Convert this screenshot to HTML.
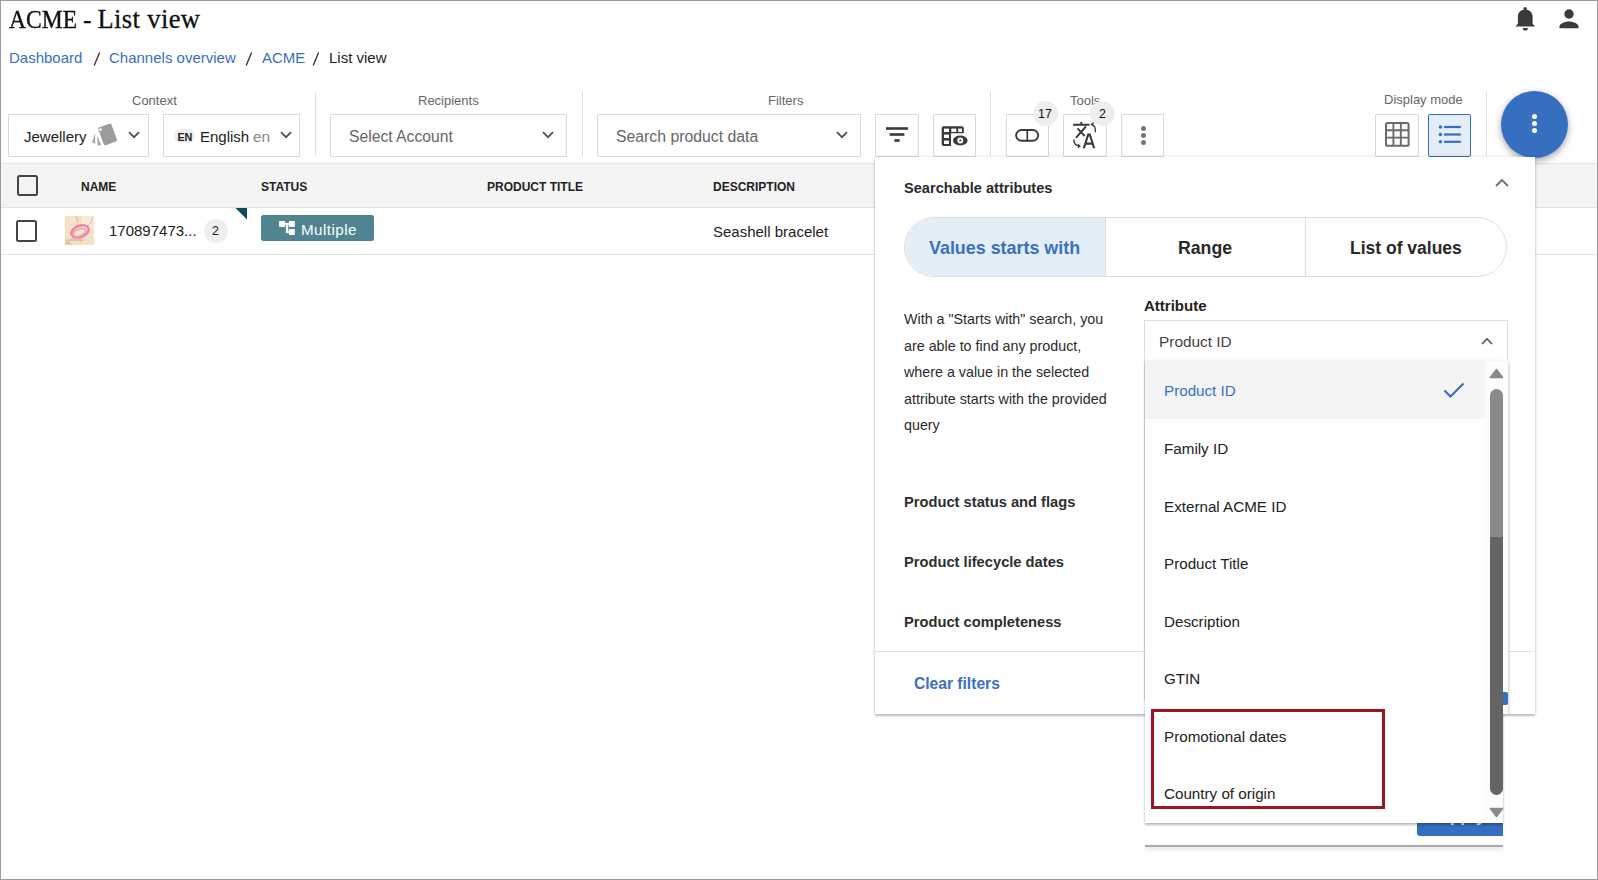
<!DOCTYPE html>
<html><head><meta charset="utf-8">
<style>
*{box-sizing:border-box;margin:0;padding:0}
html,body{width:1598px;height:880px;overflow:hidden;background:#fff}
body{font-family:"Liberation Sans",sans-serif;color:#222;position:relative}
.abs{position:absolute}
.frame{position:absolute;left:0;top:0;width:1598px;height:880px;border:1px solid #9a9a9a;z-index:100;pointer-events:none}
.t{position:absolute;white-space:nowrap;line-height:1}
.box{position:absolute;border:1px solid #d9d9d9;border-radius:1px;background:#fff}
.lbl{position:absolute;font-size:13px;color:#666;white-space:nowrap;line-height:1}
.sep{position:absolute;width:1px;background:#e0e0e0}
.th{position:absolute;font-size:12px;font-weight:700;color:#222;top:181px;line-height:1}
.item{position:absolute;left:1164px;font-size:15.2px;color:#222;line-height:1;white-space:nowrap;margin-top:1px}
.bold{font-weight:700}
</style></head><body>
<div class="frame"></div>

<!-- Title -->
<div class="t" style="left:9px;top:7px;font-family:'Liberation Serif',serif;font-size:25.5px;color:#111;-webkit-text-stroke:0.35px #111;transform:scaleX(0.924);transform-origin:0 0">ACME</div>
<div class="t" style="left:83.1px;top:7px;font-family:'Liberation Serif',serif;font-size:25.5px;color:#111;-webkit-text-stroke:0.3px #111">-</div>
<div class="t" style="left:97.4px;top:6.2px;font-family:'Liberation Serif',serif;font-size:26.5px;letter-spacing:0.4px;color:#111;-webkit-text-stroke:0.3px #111">List view</div>

<!-- bell -->
<svg class="abs" style="left:1513px;top:5px" width="24" height="28" viewBox="0 0 24 28">
<circle cx="12.2" cy="3.6" r="1.7" fill="#3a3a3a"/>
<path d="M2.4 21.6L4.9 18.8V11.6C4.9 7.4 8 4.4 12.2 4.4S19.6 7.4 19.6 11.6V18.8L22.1 21.6z" fill="#3a3a3a"/>
<path d="M9.8 22.9h5.1a2.55 2.7 0 0 1-5.1 0z" fill="#3a3a3a"/>
</svg>
<!-- person -->
<svg class="abs" style="left:1556.5px;top:6px" width="24" height="24" viewBox="0 0 24 24">
<circle cx="12" cy="8" r="4.7" fill="#3a3a3a"/>
<path d="M2.5 22.2v-1.6c0-3.2 6.3-5 9.5-5s9.5 1.8 9.5 5v1.6z" fill="#3a3a3a"/>
</svg>

<!-- breadcrumb -->
<div class="t" style="left:9px;top:50px;font-size:15px;color:#3a6fc0">Dashboard</div>
<svg class="abs" style="left:92.8px;top:51px" width="8" height="16" viewBox="0 0 8 16"><path d="M1.2 14.4L6.6 1.4" stroke="#333" stroke-width="1.35"/></svg>
<div class="t" style="left:109px;top:50px;font-size:15px;color:#3a6fc0">Channels overview</div>
<svg class="abs" style="left:245.2px;top:51px" width="8" height="16" viewBox="0 0 8 16"><path d="M1.2 14.4L6.6 1.4" stroke="#333" stroke-width="1.35"/></svg>
<div class="t" style="left:262px;top:50px;font-size:15px;color:#3a6fc0">ACME</div>
<svg class="abs" style="left:311.6px;top:51px" width="8" height="16" viewBox="0 0 8 16"><path d="M1.2 14.4L6.6 1.4" stroke="#333" stroke-width="1.35"/></svg>
<div class="t" style="left:329px;top:50px;font-size:15px;color:#222">List view</div>

<!-- toolbar labels -->
<div class="lbl" style="left:132px;top:94px">Context</div>
<div class="lbl" style="left:418px;top:94px">Recipients</div>
<div class="lbl" style="left:768px;top:94px">Filters</div>
<div class="lbl" style="left:1070px;top:94px">Tools</div>
<div class="lbl" style="left:1384px;top:93px">Display mode</div>

<div class="sep" style="left:315px;top:92px;height:64px"></div>
<div class="sep" style="left:582px;top:92px;height:64px"></div>
<div class="sep" style="left:990px;top:92px;height:64px"></div>
<div class="sep" style="left:1486px;top:91px;height:65px"></div>

<!-- context boxes -->
<div class="box" style="left:8px;top:114px;width:141px;height:43px"></div>
<div class="t" style="left:24px;top:128.5px;font-size:15px;color:#222">Jewellery</div>
<svg class="abs" style="left:85px;top:118px" width="40" height="32" viewBox="0 0 40 32">
<rect x="15.6" y="6.9" width="14" height="19" rx="1.7" transform="rotate(-20 22.6 16.4)" fill="#9c9c9c"/>
<circle cx="15.5" cy="11.6" r="1.3" fill="#fff"/>
<path d="M10 15.3L7 24.6 10.3 25.9z" fill="#a8a8a8"/>
<path d="M12 18L12.6 27.6 16.4 27.3z" fill="#a8a8a8"/>
</svg>
<svg class="abs" style="left:128px;top:130px" width="12" height="10" viewBox="0 0 12 10"><path d="M1 2.2l5 5 5-5" fill="none" stroke="#505050" stroke-width="1.8"/></svg>

<div class="box" style="left:163px;top:114px;width:137px;height:43px"></div>
<div class="abs" style="left:174px;top:129px;width:21px;height:13.5px;border-radius:7px;background:#eee"></div>
<div class="t" style="left:177.5px;top:131.5px;font-size:10.8px;color:#222;font-weight:700;letter-spacing:-0.2px">EN</div>
<div class="t" style="left:200px;top:128.5px;font-size:15px;color:#222">English</div>
<div class="t" style="left:253px;top:128.5px;font-size:15.5px;color:#888">en</div>
<svg class="abs" style="left:280px;top:130px" width="12" height="10" viewBox="0 0 12 10"><path d="M1 2.2l5 5 5-5" fill="none" stroke="#505050" stroke-width="1.8"/></svg>

<!-- recipients -->
<div class="box" style="left:330px;top:114px;width:237px;height:43px"></div>
<div class="t" style="left:349px;top:129px;font-size:15.7px;color:#666">Select Account</div>
<svg class="abs" style="left:542px;top:130px" width="12" height="10" viewBox="0 0 12 10"><path d="M1 2.2l5 5 5-5" fill="none" stroke="#505050" stroke-width="1.8"/></svg>

<!-- filters -->
<div class="box" style="left:597px;top:114px;width:264px;height:43px"></div>
<div class="t" style="left:616px;top:129px;font-size:15.8px;color:#666">Search product data</div>
<svg class="abs" style="left:836px;top:130px" width="12" height="10" viewBox="0 0 12 10"><path d="M1 2.2l5 5 5-5" fill="none" stroke="#505050" stroke-width="1.8"/></svg>

<div class="box" style="left:875px;top:114px;width:44px;height:43px"></div>
<svg class="abs" style="left:885px;top:126px" width="24" height="17" viewBox="0 0 24 17">
<rect x="1" y="1.2" width="22" height="2.6" fill="#3a3a3a"/>
<rect x="4.6" y="7.2" width="14.8" height="2.6" fill="#3a3a3a"/>
<rect x="9.4" y="13.2" width="5.2" height="2.6" fill="#3a3a3a"/>
</svg>

<div class="box" style="left:933px;top:114px;width:43px;height:43px"></div>
<svg class="abs" style="left:940px;top:125px" width="29" height="22" viewBox="0 0 29 22">
<path d="M3.5 1.2h18.5a1.8 1.8 0 0 1 1.8 1.8v5.2H11v12.9H3.5a1.8 1.8 0 0 1-1.8-1.8V3a1.8 1.8 0 0 1 1.8-1.8z" fill="#3a3a3a"/>
<rect x="4" y="3.6" width="5" height="3.4" fill="#fff"/>
<rect x="11.3" y="3.6" width="5" height="3.4" fill="#fff"/>
<rect x="18.2" y="3.6" width="3.8" height="3.4" fill="#fff"/>
<rect x="4" y="9.6" width="5" height="3.4" fill="#fff"/>
<rect x="4" y="15.6" width="5" height="3.4" fill="#fff"/>
<ellipse cx="20.3" cy="15.5" rx="7.3" ry="4.9" fill="#3a3a3a"/>
<circle cx="20.3" cy="15.5" r="2.9" fill="#fff"/>
<circle cx="20.3" cy="15.5" r="1.1" fill="#3a3a3a"/>
</svg>

<!-- tools -->
<div class="box" style="left:1006px;top:114px;width:43px;height:43px"></div>
<svg class="abs" style="left:1014px;top:128px" width="27" height="15" viewBox="0 0 27 15">
<rect x="2.1" y="2" width="22.1" height="10.7" rx="5.35" fill="none" stroke="#3a3a3a" stroke-width="1.9"/>
<line x1="13.3" y1="2" x2="13.3" y2="12.7" stroke="#3a3a3a" stroke-width="1.7"/>
</svg>
<div class="abs" style="left:1033px;top:101px;width:25px;height:25px;border-radius:50%;background:#eee"></div>
<div class="t" style="left:1038px;top:108px;font-size:12.5px;color:#111">17</div>

<div class="box" style="left:1063px;top:114px;width:44px;height:43px"></div>
<svg class="abs" style="left:1072px;top:121px" width="27" height="29" viewBox="0 0 27 29">
<path d="M1.1 3.8h16.4M9.3 1v2.8M13.9 5.5L3.9 16.8M5.6 7.3l7.1 7.8" fill="none" stroke="#3a3a3a" stroke-width="2"/>
<path d="M11.8 27.2L16.2 13.6h1.6L22.2 27.2M13.6 22.6h6.8" fill="none" stroke="#3a3a3a" stroke-width="2.1"/>
<path d="M19.8 3.4Q23.8 5 23.4 11.4" fill="none" stroke="#3a3a3a" stroke-width="1.4"/>
<path d="M21.6 1.6L19.6 3.4 21.8 4.8" fill="none" stroke="#3a3a3a" stroke-width="1.4"/>
<path d="M1.8 18.4Q1.8 24.2 7.6 25.2" fill="none" stroke="#3a3a3a" stroke-width="1.4"/>
<path d="M5.8 23.2L7.8 25.2 5.8 26.8" fill="none" stroke="#3a3a3a" stroke-width="1.4"/>
</svg>
<div class="abs" style="left:1090px;top:101px;width:25px;height:25px;border-radius:50%;background:#eee"></div>
<div class="t" style="left:1099px;top:108px;font-size:12.5px;color:#111">2</div>

<div class="box" style="left:1121px;top:114px;width:43px;height:43px"></div>
<div class="abs" style="left:1141px;top:126px;width:5px;height:5px;border-radius:50%;background:#777"></div>
<div class="abs" style="left:1141px;top:133px;width:5px;height:5px;border-radius:50%;background:#777"></div>
<div class="abs" style="left:1141px;top:140px;width:5px;height:5px;border-radius:50%;background:#777"></div>

<!-- display mode -->
<div class="box" style="left:1375px;top:114px;width:44px;height:43px"></div>
<svg class="abs" style="left:1385px;top:122px" width="25" height="25" viewBox="0 0 25 25">
<rect x="1" y="1" width="22.6" height="22.8" rx="1.6" fill="none" stroke="#6b6b6b" stroke-width="2"/>
<path d="M8.4 1v22.8M15.8 1v22.8M1 8.2h22.6M1 15.6h22.6" stroke="#6b6b6b" stroke-width="1.9"/>
</svg>
<div class="abs" style="left:1428px;top:114px;width:43px;height:43px;border:1px solid #356dbf;border-radius:2px;background:#e4eef9"></div>
<svg class="abs" style="left:1437px;top:124px" width="26" height="22" viewBox="0 0 26 22">
<circle cx="3.4" cy="3" r="1.7" fill="#356dbf"/><circle cx="3.4" cy="10.5" r="1.7" fill="#356dbf"/><circle cx="3.4" cy="17.7" r="1.7" fill="#356dbf"/>
<rect x="7" y="1.9" width="16.8" height="2.2" fill="#356dbf"/><rect x="7" y="9.4" width="16.8" height="2.2" fill="#356dbf"/><rect x="7" y="16.7" width="16.8" height="2.2" fill="#356dbf"/>
</svg>

<!-- table header -->
<div class="abs" style="left:1px;top:163px;width:1596px;height:45px;background:#f4f4f4;border-top:1px solid #e2e2e2;border-bottom:1px solid #e2e2e2"></div>
<div class="abs" style="left:17px;top:175px;width:21px;height:21px;border:2px solid #444;border-radius:2.5px"></div>
<div class="th" style="left:81px">NAME</div>
<div class="th" style="left:261px">STATUS</div>
<div class="th" style="left:487px">PRODUCT TITLE</div>
<div class="th" style="left:713px">DESCRIPTION</div>

<!-- row -->
<div class="abs" style="left:1px;top:254px;width:1596px;height:1px;background:#e2e2e2"></div>
<div class="abs" style="left:16px;top:220px;width:21px;height:22px;border:2px solid #444;border-radius:2.5px"></div>
<svg class="abs" style="left:65px;top:216px" width="29" height="29" viewBox="0 0 29 29">
<defs><filter id="bl"><feGaussianBlur stdDeviation="0.5"/></filter></defs>
<rect width="29" height="29" fill="#f4e2c6"/>
<rect x="17" y="0" width="12" height="12" fill="#f7ecd6"/>
<g filter="url(#bl)">
<path d="M0 22L8 29H0z" fill="#e8c9a0"/>
<path d="M11 0l2 7M27 1c0 5-2 7-5 9" stroke="#d9a79a" stroke-width="0.8" fill="none"/>
<ellipse cx="15" cy="15.5" rx="9" ry="5.6" transform="rotate(-22 15 15.5)" fill="none" stroke="#ee86ac" stroke-width="2.6"/>
<ellipse cx="14.5" cy="16.5" rx="6.5" ry="3.4" transform="rotate(-22 14.5 16.5)" fill="none" stroke="#f0a0bc" stroke-width="1.5"/>
<path d="M3 25c4-2 9-2 15 0" stroke="#e6c3a0" stroke-width="2.6" fill="none"/>
</g>
</svg>
<div class="t" style="left:109px;top:223px;font-size:15px;color:#222">170897473...</div>
<div class="abs" style="left:204px;top:219px;width:24px;height:24px;border-radius:50%;background:#eee"></div>
<div class="t" style="left:212px;top:225px;font-size:12.5px;color:#222">2</div>
<svg class="abs" style="left:235px;top:208px" width="12" height="12" viewBox="0 0 12 12"><path d="M0.5 0H12V11.5z" fill="#0c4a5c"/></svg>
<div class="abs" style="left:261px;top:215px;width:113px;height:26px;border-radius:2.5px;background:#4f8490"></div>
<svg class="abs" style="left:278px;top:220px" width="18" height="16" viewBox="0 0 18 16">
<rect x="1.1" y="1" width="5.9" height="5.9" fill="#fff"/><rect x="10.9" y="1" width="5.9" height="5.9" fill="#fff"/><rect x="10.9" y="9.1" width="5.9" height="5.9" fill="#fff"/>
<rect x="7" y="2.9" width="3.9" height="2.1" fill="#fff"/><rect x="7.9" y="5" width="2.3" height="8.1" fill="#fff"/><rect x="7.9" y="11" width="3" height="2.1" fill="#fff"/>
</svg>
<div class="t" style="left:301px;top:221.5px;font-size:15.2px;letter-spacing:0.45px;color:#fff">Multiple</div>
<div class="t" style="left:713px;top:224px;font-size:15px;color:#222">Seashell bracelet</div>

<!-- FAB -->
<div class="abs" style="left:1501px;top:91px;width:67px;height:67px;border-radius:50%;background:#366ec0;box-shadow:0 3px 6px rgba(0,0,0,.25),0 2px 10px rgba(0,0,0,.12)"></div>
<div class="abs" style="left:1532px;top:114px;width:5.4px;height:5.4px;border-radius:50%;background:#fff"></div>
<div class="abs" style="left:1532px;top:121px;width:5.4px;height:5.4px;border-radius:50%;background:#fff"></div>
<div class="abs" style="left:1532px;top:128px;width:5.4px;height:5.4px;border-radius:50%;background:#fff"></div>

<!-- PANEL -->
<div id="panel" class="abs" style="left:875px;top:157px;width:660px;height:557px;background:#fff;box-shadow:0 2px 2px rgba(0,0,0,.22),0 0 4px rgba(0,0,0,.14)"></div>
<div class="t bold" style="left:904px;top:181px;font-size:14.6px;color:#2a2a2a">Searchable attributes</div>
<svg class="abs" style="left:1494.5px;top:178px" width="14" height="9" viewBox="0 0 14 9"><path d="M1 8l6-6 6 6" fill="none" stroke="#6e6e6e" stroke-width="1.8"/></svg>

<!-- segmented -->
<div class="abs" style="left:904px;top:217px;width:603px;height:60px;border:1px solid #ddd;border-radius:30px;overflow:hidden;background:#fff">
  <div class="abs" style="left:0;top:0;width:200px;height:58px;background:#e3eef9"></div>
  <div class="abs" style="left:200px;top:0;width:1px;height:58px;background:#ddd"></div>
  <div class="abs" style="left:400px;top:0;width:1px;height:58px;background:#ddd"></div>
</div>
<div class="t bold" style="left:929px;top:240px;font-size:17.9px;color:#3a70c2">Values starts with</div>
<div class="t bold" style="left:1178px;top:240px;font-size:17.7px;color:#292929">Range</div>
<div class="t bold" style="left:1350px;top:240px;font-size:17.5px;color:#292929">List of values</div>

<!-- description -->
<div class="abs" style="left:904px;top:306px;width:230px;font-size:14.3px;line-height:26.5px;color:#2b2b2b">With a "Starts with" search, you<br>are able to find any product,<br>where a value in the selected<br>attribute starts with the provided<br>query</div>

<div class="t bold" style="left:1144px;top:298px;font-size:15px;color:#222">Attribute</div>
<div class="abs" style="left:1144px;top:320px;width:364px;height:380px;border:1px solid #ddd;border-bottom:none"></div>
<div class="t" style="left:1159px;top:334px;font-size:15.4px;color:#444">Product ID</div>
<svg class="abs" style="left:1481px;top:337px" width="12" height="8" viewBox="0 0 12 8"><path d="M1 7l5-5 5 5" fill="none" stroke="#555" stroke-width="1.6"/></svg>

<div class="t bold" style="left:904px;top:495px;font-size:14.7px;color:#2e2e2e">Product status and flags</div>
<div class="t bold" style="left:904px;top:555px;font-size:14.7px;color:#2e2e2e">Product lifecycle dates</div>
<div class="t bold" style="left:904px;top:615px;font-size:14.7px;color:#2e2e2e">Product completeness</div>

<div class="abs" style="left:875px;top:651px;width:660px;height:1px;background:#e2e2e2"></div>
<div class="t bold" style="left:914px;top:676px;font-size:15.6px;color:#3a70c2">Clear filters</div>

<!-- lower pasted part -->
<div class="abs" style="left:1417px;top:800px;width:86px;height:36px;background:#356dbf;border-radius:0 0 0 3px;overflow:hidden"><div class="t bold" style="left:20px;top:7px;font-size:17.5px;color:#fff">Apply</div></div>
<div class="abs" style="left:1145px;top:845px;width:358px;height:1.5px;background:#aaa;box-shadow:0 2px 4px rgba(0,0,0,.18)"></div>

<!-- DROPDOWN -->
<div id="dd" class="abs" style="left:1145px;top:361px;width:358px;height:462px;background:#fff;box-shadow:0 2px 2px rgba(0,0,0,.24),0 0 3px rgba(0,0,0,.12);overflow:hidden">
  <div class="abs" style="left:0;top:0;width:340px;height:58px;background:#f4f4f4"></div>
  <div class="abs" style="left:340px;top:0;width:18px;height:461px;background:#fcfcfc"></div>
  <svg class="abs" style="left:344px;top:7px" width="15" height="11" viewBox="0 0 15 11"><path d="M7.5 1.5L13.5 9.5H1.5z" fill="#8a8a8a" stroke="#8a8a8a" stroke-width="1.6" stroke-linejoin="round"/></svg>
  <div class="abs" style="left:345px;top:28px;width:13px;height:406px;border-radius:6.5px;background:linear-gradient(#8a8a8a 0,#8a8a8a 148px,#646464 148px)"></div>
  <svg class="abs" style="left:344px;top:446px" width="15" height="11" viewBox="0 0 15 11"><path d="M7.5 9.5L13.5 1.5H1.5z" fill="#8a8a8a" stroke="#8a8a8a" stroke-width="1.6" stroke-linejoin="round"/></svg>
</div>
<div class="abs" style="left:1503px;top:361px;width:5px;height:353px;background:#fcfcfc;box-shadow:1px 1px 3px rgba(0,0,0,.2);clip-path:inset(0 -6px 0 0)"></div>
<div class="abs" style="left:1503px;top:692px;width:4.5px;height:12.5px;background:#356dbf;border-radius:0 2px 2px 0"></div>
<div class="item" style="top:382px;color:#3a70c2">Product ID</div>
<svg class="abs" style="left:1443px;top:382px" width="22" height="16" viewBox="0 0 22 16"><path d="M1.5 8.5l6 6L20.5 1.5" fill="none" stroke="#3a70c2" stroke-width="2.2"/></svg>
<div class="item" style="top:440px">Family ID</div>
<div class="item" style="top:498px">External ACME ID</div>
<div class="item" style="top:555px">Product Title</div>
<div class="item" style="top:613px">Description</div>
<div class="item" style="top:670px">GTIN</div>
<div class="item" style="top:728px">Promotional dates</div>
<div class="item" style="top:785px">Country of origin</div>
<div class="abs" style="left:1151px;top:709px;width:234px;height:100px;border:3px solid #9e1420"></div>

</body></html>
